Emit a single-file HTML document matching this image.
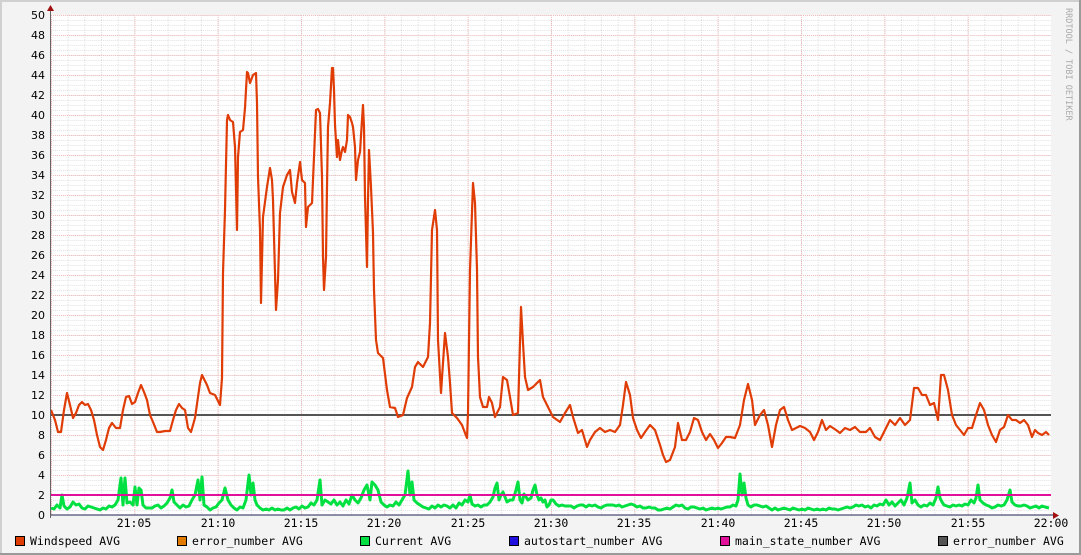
<!DOCTYPE html>
<html><head><meta charset="utf-8"><style>
html,body{margin:0;padding:0;background:#f3f3f3;}
svg{display:block;}
text{font-family:"DejaVu Sans Mono","Liberation Mono",monospace;font-size:11.5px;fill:#000;}
.yl{font-family:"DejaVu Sans","Liberation Sans",sans-serif;font-size:11px;text-anchor:end;}
</style></head><body>
<svg width="1081" height="555" viewBox="0 0 1081 555" xmlns="http://www.w3.org/2000/svg">
<defs>
<pattern id="minor" x="51" y="15" width="16.6667" height="5" patternUnits="userSpaceOnUse">
<line x1="0.5" y1="0" x2="0.5" y2="5" stroke="#e2e2e2" stroke-width="1" stroke-dasharray="1,1"/>
<line x1="0" y1="0.5" x2="16.6667" y2="0.5" stroke="#e2e2e2" stroke-width="1" stroke-dasharray="1,1"/>
</pattern>
<pattern id="major" x="51" y="15" width="83.333" height="20" patternUnits="userSpaceOnUse">
<line x1="0.5" y1="0" x2="0.5" y2="20" stroke="#f2bcbc" stroke-width="1" stroke-dasharray="1,1"/>
<line x1="0" y1="0.5" x2="83.333" y2="0.5" stroke="#f2bcbc" stroke-width="1" stroke-dasharray="1,1"/>
</pattern>
</defs>
<rect x="0" y="0" width="1081" height="555" fill="#f3f3f3"/>
<line x1="0" y1="1" x2="1081" y2="1" stroke="#d0d0d0" stroke-width="2"/>
<line x1="1" y1="0" x2="1" y2="555" stroke="#d0d0d0" stroke-width="2"/>
<line x1="0" y1="554" x2="1081" y2="554" stroke="#9a9a9a" stroke-width="2"/>
<line x1="1080" y1="0" x2="1080" y2="555" stroke="#9a9a9a" stroke-width="2"/>
<rect x="51" y="15" width="1000" height="500" fill="#fff"/>
<rect x="51" y="15" width="1000" height="500" fill="url(#minor)"/>
<rect x="51" y="15" width="1000" height="500" fill="url(#major)"/>

<g class="yl">
<text class="yl" x="45" y="19">50</text><text class="yl" x="45" y="39">48</text><text class="yl" x="45" y="59">46</text><text class="yl" x="45" y="79">44</text><text class="yl" x="45" y="99">42</text><text class="yl" x="45" y="119">40</text><text class="yl" x="45" y="139">38</text><text class="yl" x="45" y="159">36</text><text class="yl" x="45" y="179">34</text><text class="yl" x="45" y="199">32</text><text class="yl" x="45" y="219">30</text><text class="yl" x="45" y="239">28</text><text class="yl" x="45" y="259">26</text><text class="yl" x="45" y="279">24</text><text class="yl" x="45" y="299">22</text><text class="yl" x="45" y="319">20</text><text class="yl" x="45" y="339">18</text><text class="yl" x="45" y="359">16</text><text class="yl" x="45" y="379">14</text><text class="yl" x="45" y="399">12</text><text class="yl" x="45" y="419">10</text><text class="yl" x="45" y="439">8</text><text class="yl" x="45" y="459">6</text><text class="yl" x="45" y="479">4</text><text class="yl" x="45" y="499">2</text><text class="yl" x="45" y="519">0</text>
</g>
<g text-anchor="middle">
<text x="134" y="527" text-anchor="middle">21:05</text><text x="218" y="527" text-anchor="middle">21:10</text><text x="301" y="527" text-anchor="middle">21:15</text><text x="384" y="527" text-anchor="middle">21:20</text><text x="468" y="527" text-anchor="middle">21:25</text><text x="551" y="527" text-anchor="middle">21:30</text><text x="634" y="527" text-anchor="middle">21:35</text><text x="718" y="527" text-anchor="middle">21:40</text><text x="801" y="527" text-anchor="middle">21:45</text><text x="884" y="527" text-anchor="middle">21:50</text><text x="968" y="527" text-anchor="middle">21:55</text><text x="1051" y="527" text-anchor="middle">22:00</text>
</g>

<polyline fill="none" stroke="#00e040" stroke-width="3" stroke-linejoin="round" points="51,508 54,509 57,505 60,508 62,495 64,506 67,509 70,507 73,502 76,505 79,504 82,508 85,509 88,506 91,507 94,508 97,509 100,510 103,508 106,509 109,506 112,507 115,505 118,500 121,478 123,505 125,478 127,503 130,502 133,505 135,487 137,505 139,488 141,490 143,505 146,508 149,508 152,508 155,506 158,505 161,508 164,506 167,503 170,498 172,490 174,502 177,505 180,508 183,505 186,507 189,506 192,500 195,495 198,480 200,500 202,477 204,505 207,507 210,510 213,508 216,507 219,503 222,500 225,488 228,500 231,505 234,508 237,510 240,507 243,508 246,500 249,475 251,495 253,483 255,500 257,505 260,508 263,510 266,509 269,510 272,508 275,510 278,509 281,510 284,510 287,508 290,510 293,508 296,507 299,509 302,506 305,508 308,507 311,503 314,505 317,500 320,480 322,505 325,500 328,502 331,504 334,500 337,505 340,502 343,506 346,500 349,504 352,495 355,500 358,503 361,498 364,490 367,485 370,500 372,482 375,485 378,490 381,502 384,505 387,507 390,505 393,506 396,502 399,505 402,500 405,495 408,471 410,495 412,482 414,500 417,503 420,505 423,507 426,508 429,509 432,506 435,508 438,505 441,507 444,505 447,506 450,508 453,505 456,508 459,503 462,505 465,500 468,502 470,495 472,504 475,506 478,505 481,507 484,505 487,505 490,502 493,497 495,488 497,483 499,500 501,495 503,492 505,497 507,502 510,500 513,500 516,490 518,482 520,500 522,503 524,494 526,497 528,500 531,498 533,490 535,485 537,495 539,500 541,498 543,502 545,500 547,507 549,505 551,500 553,500 556,504 559,506 562,505 565,506 568,506 571,506 574,508 577,506 580,505 583,505 586,507 589,505 592,506 595,505 598,507 601,508 604,506 607,505 610,505 613,505 616,506 619,505 622,507 625,506 628,505 631,504 634,505 637,507 640,506 643,508 646,508 649,507 652,508 655,508 658,510 661,510 664,509 667,508 670,509 673,507 676,505 679,506 682,505 685,508 688,509 691,507 694,507 697,508 700,509 703,508 706,510 709,509 712,508 715,509 718,508 721,509 724,508 727,507 730,507 733,505 736,506 738,500 740,474 742,495 744,483 746,498 748,505 751,507 754,505 757,505 760,506 763,507 766,506 769,508 772,510 775,508 778,510 781,509 784,508 787,509 790,510 793,508 796,509 799,510 802,509 805,510 808,508 811,509 814,510 817,509 820,510 823,509 826,510 829,508 832,509 835,509 838,510 841,509 844,508 847,507 850,508 853,507 856,505 859,506 862,505 865,507 868,506 871,508 874,505 877,506 880,504 883,505 886,500 889,505 892,502 895,506 898,503 901,500 904,505 907,498 910,483 912,503 915,500 918,505 921,507 924,505 927,506 930,503 933,505 936,498 938,487 940,498 942,502 944,505 947,506 950,507 953,505 956,506 959,505 962,506 965,504 968,505 971,500 974,503 976,498 978,485 980,500 983,503 986,505 989,506 992,508 995,507 998,505 1001,506 1004,505 1007,500 1010,490 1012,502 1015,505 1018,506 1021,506 1024,505 1027,506 1030,508 1033,507 1036,506 1039,508 1042,506 1045,507 1049,508"/>

<line x1="51" y1="495" x2="1051" y2="495" stroke="#e0109a" stroke-width="2"/>
<line x1="51" y1="415" x2="1051" y2="415" stroke="#555" stroke-width="2"/>

<polyline fill="none" stroke="#e03c06" stroke-width="2.2" stroke-linejoin="round" points="51,410 55,420 58,432 61,432 64,410 67,393 70,405 73,418 76,413 79,405 82,402 85,405 88,404 91,410 94,420 97,435 100,447 103,450 106,440 109,428 112,423 116,428 120,428 123,410 126,397 129,396 132,404 135,402 138,393 141,385 144,392 147,400 150,415 153,422 157,432 160,432 165,431 170,431 173,420 176,410 179,404 182,408 185,410 188,428 191,432 195,418 200,383 202,375 207,385 210,393 215,395 220,405 222,378 223,273 225,210 227,120 228,115 230,120 233,122 235,147 237,230 238,157 240,132 243,130 245,108 247,72 248,73 250,83 253,75 256,73 257,103 258,177 260,230 261,303 263,217 267,187 270,168 272,180 273,200 276,310 278,280 280,213 283,187 287,175 290,170 292,192 295,203 297,183 300,162 302,180 305,183 306,227 308,207 312,203 314,157 316,110 318,109 320,113 322,177 323,257 324,290 326,257 327,187 328,127 330,103 332,68 333,68 334,90 335,125 337,157 338,140 340,160 342,150 343,147 345,152 347,140 348,115 350,117 352,123 353,127 355,147 356,180 358,160 360,152 362,120 363,105 364,127 365,197 367,267 368,200 369,150 371,187 373,233 374,290 376,340 378,353 380,355 383,358 387,390 390,407 395,408 398,417 403,415 407,398 412,387 415,367 418,362 423,367 428,357 430,323 432,230 435,210 437,230 438,340 441,393 443,363 445,333 448,357 450,383 452,413 457,418 462,425 465,433 467,438 468,413 470,270 473,183 475,203 477,270 478,357 480,397 483,407 487,407 489,397 492,403 495,417 500,407 503,377 507,380 510,397 513,415 518,413 521,307 523,343 525,377 528,390 533,387 540,380 543,397 548,407 553,417 560,422 565,413 570,405 573,417 578,433 582,430 587,447 590,440 595,432 600,428 605,432 610,430 615,432 620,425 623,405 626,382 630,395 633,418 637,430 641,438 645,432 650,425 655,430 660,445 663,455 666,462 670,460 675,447 678,423 682,440 686,440 690,432 694,418 698,420 702,432 706,440 710,434 714,440 718,448 722,443 726,437 730,437 735,438 740,425 744,400 748,384 752,400 755,425 760,415 764,410 768,425 772,447 776,425 780,410 784,407 788,420 792,430 796,428 800,426 805,428 810,432 814,440 818,432 822,420 826,430 830,426 836,430 840,433 845,428 850,430 855,427 860,432 866,432 870,428 875,437 880,440 884,432 890,420 895,425 900,418 905,425 910,420 914,388 918,388 922,395 926,395 930,405 934,403 938,420 941,375 944,375 948,390 952,415 956,425 960,430 964,435 968,428 972,428 976,415 980,403 984,410 988,425 992,435 996,442 1000,430 1004,427 1008,415 1012,420 1016,420 1020,423 1024,420 1028,425 1032,437 1035,430 1038,433 1042,435 1046,432 1049,435"/>

<line x1="51" y1="515" x2="1056" y2="515" stroke="#202050" stroke-width="1"/>
<line x1="50.5" y1="10" x2="50.5" y2="518" stroke="#666" stroke-width="1"/>
<polygon points="47,11 54,11 50.5,5" fill="#a01010"/>
<polygon points="1053,512 1053,519 1059,515.5" fill="#a01010"/>

<text x="1066" y="8" transform="rotate(90 1066 8)" style="font-size:8.5px;fill:#aaa;">RRDTOOL / TOBI OETIKER</text>

<rect x="15.5" y="536.5" width="9" height="9" fill="#e03c06" stroke="#000"/>
<text x="30" y="545">Windspeed AVG</text>
<rect x="177.5" y="536.5" width="9" height="9" fill="#e07a00" stroke="#000"/>
<text x="192" y="545">error_number AVG</text>
<rect x="360.5" y="536.5" width="9" height="9" fill="#00e040" stroke="#000"/>
<text x="375" y="545">Current AVG</text>
<rect x="509.5" y="536.5" width="9" height="9" fill="#2010e0" stroke="#000"/>
<text x="524" y="545">autostart_number AVG</text>
<rect x="720.5" y="536.5" width="9" height="9" fill="#e0109a" stroke="#000"/>
<text x="735" y="545">main_state_number AVG</text>
<rect x="938.5" y="536.5" width="9" height="9" fill="#555" stroke="#000"/>
<text x="953" y="545">error_number AVG</text>
</svg>
</body></html>
